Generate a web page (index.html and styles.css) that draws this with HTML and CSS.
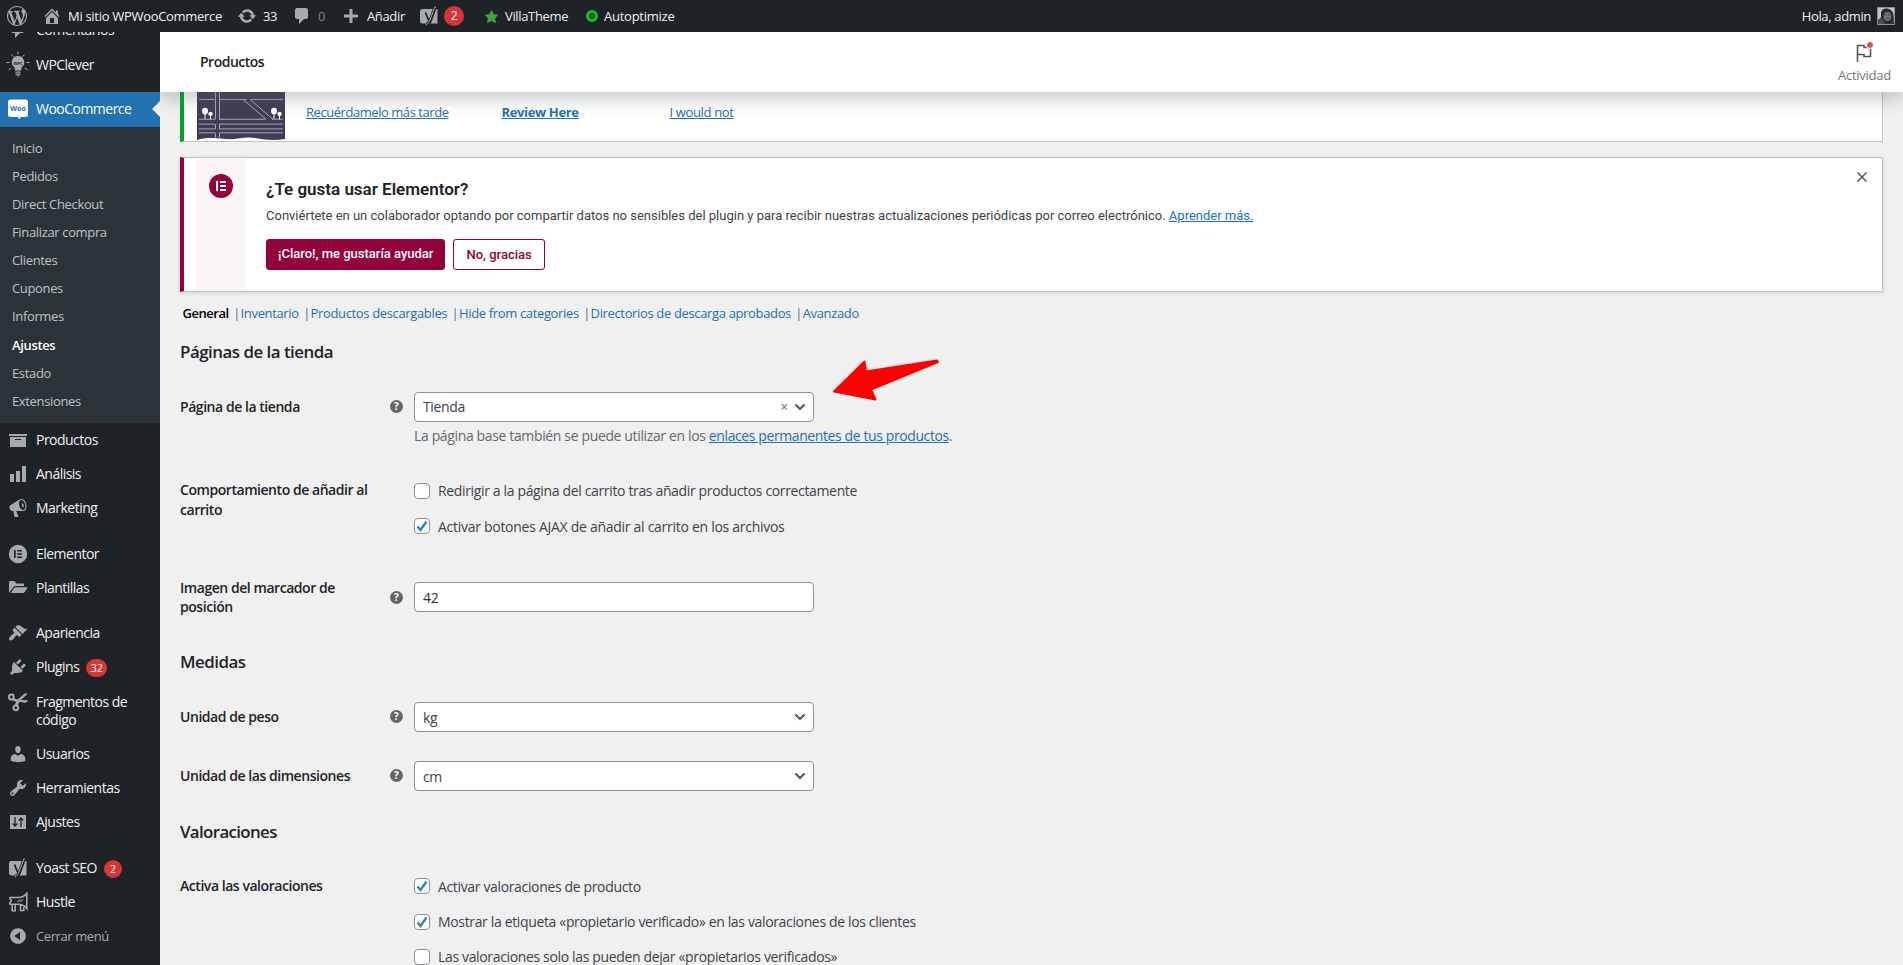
FILE: index.html
```html
<!DOCTYPE html>
<html lang="es">
<head>
  <meta charset="UTF-8" />
  <meta name="viewport" content="width=device-width, initial-scale=1.0" />
  <title>Ajustes de WooCommerce - Productos</title>
  <link rel="stylesheet" href="styles.css">
</head>
<body>
  <!-- Admin bar -->
  <header class="adminbar">
    <a class="ab-item ab-logo"><svg class="icon" viewBox="0 0 20 20"><path d="M20 10c0-5.51-4.49-10-10-10C4.48 0 0 4.49 0 10c0 5.52 4.48 10 10 10 5.51 0 10-4.48 10-10zM7.78 15.37L4.37 6.22c.55-.02 1.17-.08 1.17-.08.5-.06.44-1.13-.06-1.11 0 0-1.45.11-2.37.11-.18 0-.37 0-.58-.01C4.12 2.69 6.87 1.11 10 1.11c2.33 0 4.45.87 6.05 2.34-.68-.11-1.65.39-1.65 1.58 0 .74.45 1.36.9 2.1.35.61.55 1.36.55 2.46 0 1.49-1.4 5-1.4 5l-3.03-8.37c.54-.02.82-.17.82-.17.5-.05.44-1.25-.06-1.22 0 0-1.44.12-2.38.12-.87 0-2.33-.12-2.33-.12-.5-.03-.56 1.2-.06 1.22l.92.08 1.26 3.41zM17.41 10c.24-.64.74-1.87.43-4.25.7 1.29 1.05 2.71 1.05 4.25 0 3.29-1.73 6.24-4.4 7.78.97-2.59 1.94-5.2 2.92-7.78zM6.1 18.09C3.12 16.65 1.11 13.53 1.11 10c0-1.3.23-2.48.72-3.59C3.25 10.3 4.67 14.2 6.1 18.09zm4.03-6.63l2.58 6.98c-.86.29-1.76.45-2.71.45-.79 0-1.57-.11-2.29-.33.81-2.38 1.62-4.74 2.42-7.1z"/></svg></a>
    <a class="ab-item ab-site"><svg class="icon" viewBox="0 0 20 20"><path fill-rule="evenodd" d="M16 8.5l1.53 1.53-1.06 1.06L10 4.6l-6.47 6.49-1.06-1.06L10 2.5l4 4v-2h2v4zm-6-2.46l6 5.99V18H4v-5.97zM12 17v-5H8v5h4z"/></svg><span>Mi sitio WPWooCommerce</span></a>
    <a class="ab-item ab-updates"><svg class="icon" viewBox="0 0 20 20"><path d="M10.2 3.28c3.53 0 6.43 2.61 6.92 6h2.08l-3.5 4-3.5-4h2.32c-.45-1.97-2.21-3.45-4.32-3.45-1.45 0-2.73.71-3.54 1.78L4.95 5.66C6.23 4.2 8.11 3.28 10.2 3.28zm-.4 13.44c-3.52 0-6.43-2.61-6.92-6H.8l3.5-4c1.17 1.33 2.33 2.67 3.5 4H5.48c.45 1.97 2.21 3.45 4.32 3.45 1.45 0 2.73-.71 3.54-1.78l1.71 1.95c-1.28 1.46-3.15 2.38-5.25 2.38z"/></svg><span>33</span></a>
    <a class="ab-item ab-comments"><svg class="icon" viewBox="0 0 20 20"><path d="M5 2h9c1.1 0 2 .9 2 2v7c0 1.1-.9 2-2 2h-2l-5 5v-5H5c-1.1 0-2-.9-2-2V4c0-1.1.9-2 2-2z"/></svg><span class="zero">0</span></a>
    <a class="ab-item ab-new"><svg class="icon" viewBox="0 0 20 20"><path d="M17 8.5v3h-5.5V17h-3v-5.5H3v-3h5.5V3h3v5.5z"/></svg><span>Añadir</span></a>
    <a class="ab-item ab-yoast"><svg class="icon" viewBox="0 0 20 20"><path d="M3.500 3H18.500V17.500H3.500A2.500 2.500 0 0 1 1 15V5.500A2.500 2.500 0 0 1 3.500 3z"/><path class="cut wide" d="M16.500.5L11.300 14.500c-.8 2-1.800 3.700-4.300 4"/><path class="cut" d="M6.500 6.500l3 7.500"/><path class="line thin" d="M17 1h-1.200l-5 13.500c-.7 1.800-1.600 3-3.500 3.600v1.200"/></svg><b class="badge">2</b></a>
    <a class="ab-item ab-villa"><svg class="star" viewBox="0 0 20 20"><path d="M10 1l3 6 6 .75-4.120 4.620L16 19l-6-3-6 3 1.130-6.630L1 7.750 7 7z"/></svg><span>VillaTheme</span></a>
    <a class="ab-item ab-auto"><i class="ring"></i><span>Autoptimize</span></a>
    <a class="ab-item ab-user"><span>Hola, admin</span>
      <svg class="avatar" viewBox="0 0 18 18"><rect width="18" height="18" fill="#8c8f94"/><rect x="1" y="1" width="16" height="16" fill="#c4c6c8"/><path d="M4 15V6.500C4 3.500 6 1.500 9.500 1.500S16 4 16.500 8l.5 9H4z" fill="#2b2c2e"/><ellipse cx="10.500" cy="9.500" rx="3.600" ry="4.400" fill="#77787b"/><path d="M8 8h1.500M11.500 8H13M9.500 11.500h2.500" stroke="#222" stroke-width=".8"/><path d="M1 17v-4l3-3 2 3 2 4z" fill="#4b4d50"/></svg></a>
  </header>

  <div class="layout">
    <!-- Side menu -->
    <nav class="sidebar">
      <ul class="menu">
        <li><a class="menu-top"><svg class="icon" viewBox="0 0 20 20"><path d="M5 2h9c1.100 0 2 .9 2 2v7c0 1.100-.9 2-2 2h-2l-5 5v-5H5c-1.100 0-2-.9-2-2V4c0-1.100.9-2 2-2z"/></svg><span>Comentarios</span></a></li>
        <li><a class="menu-top"><svg class="icon bulb" viewBox="0 0 24 26"><path d="M12 5a6.200 6.200 0 0 1 3.700 11.200l-.7 3.300H9l-.7-3.300A6.200 6.200 0 0 1 12 5zM9.500 20.500h5v1.300h-5zM9.500 22.500h5v1.300h-5zM10.700 24.300h2.600v1h-2.600z"/><path class="line thin" d="M12 .5v3M5.500 3.500l2 2.300M18.500 3.500l-2 2.300M.5 11.500h3M20.500 11.500h3M2.500 19l2.800-2M21.500 19l-2.800-2"/><text x="12" y="13.500">WPC</text></svg><span>WPClever</span></a></li>
        <li class="separator"></li>
        <li><a class="menu-top current"><svg class="icon woo" viewBox="0 0 20 20"><path d="M2.500.500h15A2.500 2.500 0 0 1 20 3v12.500a2.500 2.500 0 0 1-2.500 2.500H13L11.500 20 9.500 18h-7A2.500 2.500 0 0 1 0 15.500V3A2.500 2.500 0 0 1 2.500.5z"/><text x="10" y="11.800">Woo</text></svg><span>WooCommerce</span></a>
          <ul class="submenu">
            <li>Inicio</li>
            <li>Pedidos</li>
            <li>Direct Checkout</li>
            <li>Finalizar compra</li>
            <li>Clientes</li>
            <li>Cupones</li>
            <li>Informes</li>
            <li class="active">Ajustes</li>
            <li>Estado</li>
            <li>Extensiones</li>
          </ul>
        </li>
        <li><a class="menu-top"><svg class="icon" viewBox="0 0 20 20"><path fill-rule="evenodd" d="M19 4v2H1V4h18zM2 7h16v10H2V7zm11 3V9H7v1h6z"/></svg><span>Productos</span></a></li>
        <li><a class="menu-top"><svg class="icon" viewBox="0 0 20 20"><path d="M18 18V2h-4v16h4zm-6 0V7H8v11h4zm-6 0v-8H2v8h4z"/></svg><span>Análisis</span></a></li>
        <li><a class="menu-top"><svg class="icon" viewBox="0 0 20 20"><path d="M18.150 5.940c.46 1.620.38 3.220-.02 4.480-.42 1.280-1.260 2.180-2.300 2.480-.16.060-.26.060-.4.060-.06.020-.12.020-.18.020-.06.020-.14.020-.22.020h-6.800l2.220 5.500c.02.140-.06.260-.14.340-.08.100-.24.160-.34.160H6.950c-.1 0-.26-.06-.34-.16-.08-.08-.16-.2-.14-.34l-1-5.500H4.250l-.02-.02c-.5.060-1.080-.18-1.540-.62s-.88-1.080-1.060-1.880c-.24-.8-.2-1.560-.02-2.200.18-.62.58-1.080 1.060-1.300l.02-.02 9-5.400c.1-.06.18-.1.240-.16.060-.04.140-.08.240-.12.160-.08.280-.12.500-.18 1.040-.3 2.240.1 3.220.98s1.840 2.240 2.260 3.860zm-2.580 5.980h-.02c.4-.1.740-.34 1.040-.7.580-.7.860-1.760.860-3.040 0-.64-.1-1.300-.28-1.980-.34-1.360-1.020-2.500-1.780-3.240s-1.680-1.100-2.460-.88c-.82.220-1.400.96-1.700 2-.32 1.040-.28 2.360.060 3.720.38 1.360 1 2.500 1.800 3.240.78.740 1.620 1.100 2.480.88z"/><path d="M13.500 5.200c1-.3 2 .6 2.200 1.700.3 1.200-.1 2.300-1 2.600"/></svg><span>Marketing</span></a></li>
        <li class="separator"></li>
        <li><a class="menu-top"><svg class="icon" viewBox="0 0 20 20"><path fill-rule="evenodd" d="M10 .8a9.200 9.200 0 1 1 0 18.400A9.200 9.200 0 0 1 10 .8zM6 6v8h1.700V6zM9.200 6v1.500H14V6zM9.200 9.250v1.500H14v-1.500zM9.200 12.500V14H14v-1.500z"/></svg><span>Elementor</span></a></li>
        <li><a class="menu-top"><svg class="icon" viewBox="0 0 20 20"><path d="M1 4.200C1 3.500 1.500 3 2.200 3h3.600c.5 0 .9.300 1.200.7L8.200 5.500h6.600c.7 0 1.200.5 1.200 1.200V8H7.500c-1 0-1.700.4-2.200 1.200L1 15z"/><path d="M7.300 9.200H18.500c.8 0 1.100.6.7 1.200l-2.700 3.800c-.4.500-.9.800-1.500.8H2.800l3.300-5.100c.3-.4.700-.7 1.200-.7z"/></svg><span>Plantillas</span></a></li>
        <li class="separator"></li>
        <li><a class="menu-top"><svg class="icon" viewBox="0 0 20 20"><path d="M14.480 11.060L7.410 3.990l1.500-1.500c.5-.56 2.300-.47 3.510.32 1.210.8 1.430 1.280 2.910 2.100 1.180.64 2.450 1.260 4.450.85zm-.71.710L6.700 4.700 4.930 6.470c-.39.390-.39 1.020 0 1.410l1.060 1.060c.39.390.39 1.030 0 1.420-.6.600-1.430 1.110-2.210 1.690-.35.260-.7.530-1.010.840C1.430 14.230.4 16.080 1.400 17.070c.99 1 2.840-.03 4.180-1.360.31-.31.580-.66.850-1.020.57-.78 1.080-1.610 1.690-2.210.39-.39 1.020-.39 1.410 0l1.060 1.060c.39.390 1.020.390 1.410 0z"/></svg><span>Apariencia</span></a></li>
        <li><a class="menu-top"><svg class="icon" viewBox="0 0 20 20"><path d="M13.110 4.360L9.870 7.600 8 5.730l3.240-3.240c.35-.34 1.050-.2 1.560.32.52.51.66 1.210.310 1.550zm-8 1.770l.91-1.120 9.010 9.010-1.190.84c-.71.710-2.630 1.160-3.820 1.160H6.140L4.900 17.260c-.59.590-1.540.590-2.120 0-.59-.58-.59-1.530 0-2.120l1.240-1.240v-3.880c0-1.130.4-3.190 1.090-3.890zm7.260 3.970l3.240-3.240c.34-.35 1.040-.21 1.550.31.52.51.66 1.210.310 1.550l-3.240 3.250z"/></svg><span>Plugins</span><b class="badge small">32</b></a></li>
        <li><a class="menu-top"><svg class="icon" viewBox="0 0 20 20"><circle class="line ringed" cx="3.400" cy="5" r="2.400"/><circle class="line ringed" cx="7.800" cy="15.800" r="2.400"/><path d="M4.800 6.200l5 1.200 6.500-5.600c1.200-.9 2.600-.6 3.200.3L11.800 8.900l-2.600 5.600-2.400-1 1.200-3.700-4-1.600zM11.300 9.800l1.600-1.700 7.100.2c-.3 1.500-1.600 2.400-3.200 2.400z"/></svg><span>Fragmentos de código</span></a></li>
        <li><a class="menu-top"><svg class="icon" viewBox="0 0 20 20"><path d="M10 9.250c-2.270 0-2.730-3.440-2.730-3.440C7 4.020 7.820 2 9.970 2c2.160 0 2.980 2.020 2.710 3.810 0 0-.41 3.440-2.680 3.440zm0 2.570L12.720 10c2.390 0 4.520 2.330 4.520 4.530v2.490s-3.650 1.130-7.240 1.130c-3.650 0-7.240-1.130-7.240-1.130v-2.490c0-2.250 1.940-4.480 4.470-4.480z"/></svg><span>Usuarios</span></a></li>
        <li><a class="menu-top"><svg class="icon" viewBox="0 0 20 20"><path d="M16.680 9.770c-1.340 1.340-3.300 1.670-4.950.99l-5.410 6.520c-.99.990-2.590.990-3.580 0s-.99-2.590 0-3.570l6.520-5.420c-.68-1.650-.35-3.610.99-4.950 1.280-1.280 3.120-1.620 4.720-1.060l-2.890 2.890 2.820 2.820 2.860-2.870c.53 1.580.18 3.390-1.080 4.650zM3.810 16.210c.4.390 1.040.390 1.430 0 .4-.4.400-1.040 0-1.430-.39-.4-1.030-.4-1.430 0-.39.390-.39 1.030 0 1.430z"/></svg><span>Herramientas</span></a></li>
        <li><a class="menu-top"><svg class="icon" viewBox="0 0 20 20"><path d="M2 3h16v14H2z"/><path class="cut slim" d="M7 5v8.500M13 15V6.500M4.800 11.500L7 14l2.200-2.500M10.800 8.500L13 6l2.200 2.500"/></svg><span>Ajustes</span></a></li>
        <li class="separator"></li>
        <li><a class="menu-top"><svg class="icon" viewBox="0 0 20 20"><path d="M3.500 3H18.500V17.500H3.500A2.500 2.500 0 0 1 1 15V5.500A2.500 2.500 0 0 1 3.500 3z"/><path class="cut wide" d="M16.500.5L11.300 14.500c-.8 2-1.800 3.700-4.300 4"/><path class="cut" d="M6.500 6.500l3 7.500"/><path class="line thin" d="M17 1h-1.200l-5 13.500c-.7 1.800-1.600 3-3.500 3.600v1.200"/></svg><span>Yoast SEO</span><b class="badge small round">2</b></a></li>
        <li><a class="menu-top"><svg class="icon" viewBox="0 0 20 20"><path class="line" d="M18.800 1.200v15.300c-2.500-3.500-5.500-4.200-9-4.200H2.200c-1.500-2 1-2 1-3.800s-2.500-1.800-1-3H9.800c3.500 0 6.500-.8 9-4.300zM4.200 12.500v6.300h3V12.500M12.500 13v5.500h3.300v-3.500"/><path class="line thin" d="M9 9.800l3-2 .3 1.700 3-1.800"/></svg><span>Hustle</span></a></li>
        <li><a class="menu-top collapse"><svg class="icon" viewBox="0 0 20 20"><path fill-rule="evenodd" d="M10 2.160c4.330 0 7.840 3.510 7.840 7.840s-3.510 7.840-7.840 7.840S2.160 14.330 2.160 10 5.710 2.160 10 2.160zm2 11.720V6.120L6.180 9.970z"/></svg><span>Cerrar menú</span></a></li>
      </ul>
    </nav>

    <main class="content">
      <div class="page-header">
        <h1>Productos</h1>
        <div class="activity">
          <svg viewBox="0 0 24 24"><path d="M5.500 21V4.500h6.500v2h6.500v9h-6.500v-2H5.500" /></svg>
          <i class="unread"></i>
          <span>Actividad</span>
        </div>
      </div>

      <div class="wrap">
        <div class="notice review">
          <svg class="map" viewBox="0 0 88 60" preserveAspectRatio="none"><path d="M0 0h88v58c-10 2-20 1-30-1s-18 2-30 1-18-2-28 1z" fill="#3f3d56"/><path d="M2 17h16M22 17h28M54 17h32M2 37.500h16M22 37.500h46M75 37.500h11M2 42.500h16M22 42.500h64M2 47.500h16M22 47.500h64M2 51.500h16M22 51.500h64M18.500 0v17M22.500 0v17M18.500 17v20.500M22.500 17v20.500M18.500 42.500v5M22.500 42.500v5M18.500 51.500v5M22.500 51.500v5M46 17l23 20.500M53 17l23 20.500" stroke="#a9a9b4" fill="none"/><path d="M8 30v7M13.500 33v4.500M77 30v7M82.500 33v4.500" stroke="#fff"/><g fill="#fff"><ellipse cx="8" cy="29" rx="3" ry="3.500"/><circle cx="13.500" cy="32" r="2.200"/><ellipse cx="77" cy="29" rx="3" ry="3.500"/><circle cx="82.500" cy="32" r="2.200"/></g></svg>
          <a class="later">Recuérdamelo más tarde</a>
          <a class="now">Review Here</a>
          <a>I would not</a>
        </div>

        <div class="notice elementor">
          <div class="logo-col">
            <svg class="logo" viewBox="0 0 24 24"><circle cx="12" cy="12" r="12"/><path d="M7 7h2v10H7zM11 7h6v2h-6zM11 11h6v2h-6zM11 15h6v2h-6z" fill="#fff"/></svg>
          </div>
          <div class="notice-body">
            <h3>¿Te gusta usar Elementor?</h3>
            <p>Conviértete en un colaborador optando por compartir datos no sensibles del plugin y para recibir nuestras actualizaciones periódicas por correo electrónico. <a>Aprender más.</a></p>
            <div class="actions">
              <button class="btn primary">¡Claro!, me gustaría ayudar</button>
              <button class="btn">No, gracias</button>
            </div>
          </div>
          <svg class="close" viewBox="0 0 12 12"><path d="M1.500 1.500l9 9M10.500 1.500l-9 9"/></svg>
        </div>

        <ul class="subnav">
          <li class="active">General</li>
          <li>Inventario</li>
          <li>Productos descargables</li>
          <li>Hide from categories</li>
          <li>Directorios de descarga aprobados</li>
          <li>Avanzado</li>
        </ul>

        <h2 class="first">Páginas de la tienda</h2>
        <div class="row shop-page">
          <div class="label"><span>Página de la tienda</span><i class="help">?</i></div>
          <div class="field">
            <div class="select"><span>Tienda</span><em>×</em><svg class="chevron" viewBox="0 0 12 8"><path d="M1.500 1.500L6 6l4.500-4.500"/></svg></div>
            <p class="description">La página base también se puede utilizar en los <a>enlaces permanentes de tus productos</a>.</p>
            <svg class="arrow" viewBox="0 0 106 42"><path d="M1 32.500L31.500 2.500 33 12.500 104 1.500 105 3 38 30.500 42.500 40.500z"/></svg>
          </div>
        </div>
        <div class="row cart">
          <div class="label"><span>Comportamiento de añadir al carrito</span></div>
          <div class="field">
            <label class="check"><i class="box"></i>Redirigir a la página del carrito tras añadir productos correctamente</label>
            <label class="check ajax"><i class="box on"><svg viewBox="0 0 12 12"><path d="M1.500 6.500l3 3.500L10.500 1.500"/></svg></i>Activar botones AJAX de añadir al carrito en los archivos</label>
          </div>
        </div>
        <div class="row placeholder">
          <div class="label"><span>Imagen del marcador de posición</span><i class="help">?</i></div>
          <div class="field"><div class="select text">42</div></div>
        </div>

        <h2 class="measures">Medidas</h2>
        <div class="row weight">
          <div class="label"><span>Unidad de peso</span><i class="help">?</i></div>
          <div class="field"><div class="select"><span>kg</span><svg class="chevron" viewBox="0 0 12 8"><path d="M1.500 1.500L6 6l4.500-4.500"/></svg></div></div>
        </div>
        <div class="row size">
          <div class="label"><span>Unidad de las dimensiones</span><i class="help">?</i></div>
          <div class="field"><div class="select"><span>cm</span><svg class="chevron" viewBox="0 0 12 8"><path d="M1.500 1.500L6 6l4.500-4.500"/></svg></div></div>
        </div>

        <h2 class="reviews">Valoraciones</h2>
        <div class="row ratings">
          <div class="label"><span>Activa las valoraciones</span></div>
          <div class="field">
            <label class="check"><i class="box on"><svg viewBox="0 0 12 12"><path d="M1.500 6.500l3 3.500L10.500 1.500"/></svg></i>Activar valoraciones de producto</label>
            <label class="check"><i class="box on"><svg viewBox="0 0 12 12"><path d="M1.500 6.500l3 3.500L10.500 1.500"/></svg></i>Mostrar la etiqueta «propietario verificado» en las valoraciones de los clientes</label>
            <label class="check"><i class="box"></i>Las valoraciones solo las pueden dejar «propietarios verificados»</label>
          </div>
        </div>
      </div>
    </main>
  </div>
</body>
</html>
```

FILE: styles.css
```css
* {
  box-sizing: border-box;
}
body {
  margin: 0;
  height: 100vh;
  overflow: hidden;
  background: #f0f0f1;
  color: #3c434a;
  font: 13px/1.4 "Open Sans", "Noto Sans", sans-serif;
  letter-spacing: -0.35px;
}
ul, h1, h2, h3, p {
  margin: 0;
  padding: 0;
}
ul {
  list-style: none;
}
i, em {
  font-style: normal;
}
a {
  color: #2271b1;
}
.icon {
  width: 20px;
  height: 20px;
  flex: none;
  fill: #a7aaad;
}
.icon .line {
  fill: none;
  stroke: #a7aaad;
  stroke-width: 1.6;
}
.icon .ringed {
  stroke-width: 2;
}
.icon .thin {
  stroke-width: 1;
}
.icon .cut {
  fill: none;
  stroke: #1d2327;
  stroke-width: 1.8;
}
.icon .slim {
  stroke-width: 1.3;
}
.icon .wide {
  stroke-width: 3.4;
}

/* admin bar */
.adminbar {
  position: relative;
  z-index: 3;
  display: flex;
  height: 32px;
  padding: 0 8px 0 7px;
  background: #1d2327;
}
.ab-item {
  display: flex;
  align-items: center;
  gap: 6px;
  color: #f0f0f1;
  white-space: nowrap;
}
.ab-logo { width: 35px; }
.ab-site {
  width: 195px;
  letter-spacing: -0.3px;
}
.ab-updates { width: 55px; }
.ab-comments { width: 49px; }
.ab-new { width: 78px; }
.ab-yoast { width: 65px; }
.ab-villa { width: 102px; }
.ab-auto { letter-spacing: -0.25px; }
.ab-user { margin-left: auto; }
.ab-comments .zero {
  color: #a7aaad;
  opacity: 0.7;
}
.badge {
  display: inline-flex;
  align-items: center;
  justify-content: center;
  width: 20px;
  height: 20px;
  border-radius: 10px;
  background: #d63638;
  color: #fff;
  font-size: 12px;
  font-weight: 400;
}
.ab-yoast .badge {
  margin-left: -1px;
}
.star {
  width: 15px;
  height: 15px;
  fill: #46a03c;
}
.ring {
  width: 12px;
  height: 12px;
  border: 3px solid #0c0;
  border-radius: 50%;
}
.avatar {
  width: 18px;
  height: 18px;
}

/* side menu */
.layout {
  display: flex;
  height: calc(100vh - 32px);
}
.sidebar {
  flex: 0 0 160px;
  overflow: hidden;
  background: #1d2327;
}
.menu {
  margin-top: -18.6px;
}
.menu-top {
  position: relative;
  display: flex;
  min-height: 34.25px;
  padding: 8px 8px 8px 36px;
  color: #f0f0f1;
  font-size: 14px;
  line-height: 18.2px;
  letter-spacing: -0.52px;
}
.menu-top .icon {
  margin: -1px 8px -1px -28px;
}
.menu-top .bulb {
  width: 24px;
  height: 26px;
  margin: -5px 6px -4px -30px;
}
.icon text {
  font-size: 4px;
  font-weight: 700;
  text-anchor: middle;
  letter-spacing: 0;
  fill: #1d2327;
}
.icon.woo text {
  font-size: 7px;
  fill: #2271b1;
}
.menu-top.current {
  margin-top: -0.6px;
  background: #2271b1;
  color: #fff;
}
.current .icon {
  fill: #fff;
}
.current::after {
  content: "";
  position: absolute;
  right: 0;
  top: 9px;
  border: 8px solid transparent;
  border-left: 0;
  border-right-color: #f0f0f1;
}
.menu-top .small {
  width: 21px;
  height: 18px;
  margin: 1px 0 -1px 7px;
  font-size: 11px;
  letter-spacing: 0;
}
.menu-top .round {
  width: 18px;
}
.separator {
  height: 11px;
}
.submenu {
  padding: 7px 0 7.8px;
  background: #2c3338;
}
.submenu li {
  padding: 5px 12px;
  height: 28.15px;
  color: #bfc2c5;
}
.submenu .active {
  color: #fff;
  font-weight: 600;
}
.menu-top.collapse {
  color: #a7aaad;
  font-size: 13px;
  letter-spacing: -0.4px;
}

/* page header */
.content {
  flex: 1;
  overflow: hidden;
}
.page-header {
  position: relative;
  z-index: 2;
  display: flex;
  align-items: center;
  justify-content: space-between;
  height: 60px;
  padding: 0 12px 0 40px;
  background: #fff;
  box-shadow: 0 8px 16px 0 rgba(85, 93, 102, 0.3);
}
.page-header h1 {
  color: #1e1e1e;
  font-size: 14px;
  font-weight: 600;
  letter-spacing: -0.5px;
}
.activity {
  position: relative;
  display: flex;
  flex-direction: column;
  align-items: center;
  padding-top: 2px;
  color: #757575;
  letter-spacing: -0.25px;
}
.activity svg {
  width: 24px;
  height: 24px;
  margin-bottom: 1px;
  fill: none;
  stroke: #50575e;
  stroke-width: 1.6;
}
.unread {
  position: absolute;
  top: 2px;
  left: 28px;
  width: 8px;
  height: 8px;
  border: 1px solid #fff;
  border-radius: 50%;
  background: #d94f4f;
}

/* notices */
.wrap {
  padding: 0 20px;
}
.notice {
  display: flex;
  border: 1px solid #c3c4c7;
  border-left-width: 4px;
  background: #fff;
}
.review {
  height: 60px;
  margin-top: -10px;
  padding-left: 13px;
  align-items: flex-start;
  border-left-color: #00a32a;
}
.map {
  width: 88px;
  height: 58px;
  margin-right: 21px;
}
.review a {
  margin-top: 20px;
  width: 168px;
  text-decoration: underline;
}
.review .later {
  width: 195.5px;
  letter-spacing: -0.45px;
}
.review .now {
  font-weight: 700;
}
.elementor {
  height: 135px;
  margin-top: 15px;
  padding: 1px 14px 1px 12px;
  border-left-color: #93003c;
  box-shadow: 0 1px 4px rgba(0, 0, 0, 0.15);
  font-family: Roboto, sans-serif;
  letter-spacing: 0;
}
.logo-col {
  width: 50px;
  padding: 15px 13px;
  background: #fcf5f8;
}
.logo {
  width: 24px;
  height: 24px;
  fill: #93003c;
}
.notice-body {
  flex: 1;
  padding: 19px 0 0 20px;
}
.notice-body h3 {
  color: #1d2327;
  font-size: 17px;
  font-weight: 600;
  line-height: 22px;
}
.notice-body p {
  margin-top: 7px;
  line-height: 18px;
}
.notice-body a, .description a {
  text-decoration: underline;
}
.actions {
  display: flex;
  gap: 8px;
  margin-top: 14px;
}
.btn {
  height: 31px;
  padding: 0 12px;
  border: 1px solid #93003c;
  border-radius: 3px;
  background: #fff;
  color: #93003c;
  font: 500 13px Roboto, sans-serif;
}
.btn.primary {
  padding: 0 11px 2px;
  background: #93003c;
  color: #fff;
}
.close {
  width: 12px;
  height: 12px;
  margin-top: 12px;
  stroke: #50575e;
  stroke-width: 1.5;
}

/* section links */
.subnav {
  display: flex;
  height: 20px;
  margin-top: 11px;
  padding-left: 2.5px;
  color: #2271b1;
  line-height: 20px;
  letter-spacing: -0.35px;
}
.subnav li + li::before {
  content: "|";
  margin: 0 0.6px 0 4.4px;
  color: #646970;
}
.subnav .active {
  color: #000;
  font-weight: 600;
  letter-spacing: -0.45px;
}

/* settings form */
h2 {
  color: #1d2327;
  font-size: 16.9px;
  font-weight: 600;
  line-height: 24px;
  letter-spacing: -0.5px;
}
.first { margin-top: 17px; }
.measures { margin-top: 33.5px; }
.reviews {
  margin-top: 29px;
  letter-spacing: -0.65px;
}
.row {
  display: grid;
  grid-template-columns: 234px 1fr;
  font-size: 14px;
}
.shop-page { margin-top: 28px; }
.cart { margin-top: 34px; }
.placeholder {
  align-items: center;
  margin-top: 40.5px;
}
.weight { margin-top: 28px; }
.size { margin-top: 29px; }
.ratings { margin-top: 31px; }
.weight, .size {
  align-items: center;
}
.label {
  display: flex;
  align-items: center;
  justify-content: space-between;
  padding-right: 11px;
  color: #1d2327;
  font-weight: 600;
  line-height: 19.5px;
  letter-spacing: -0.45px;
}
.label span {
  width: 200px;
}
.weight .label, .size .label {
  padding-bottom: 2px;
}
.shop-page .label {
  height: 29px;
}
.cart .label, .ratings .label {
  align-items: flex-start;
}
.ratings .label {
  padding-top: 1px;
}
.help {
  width: 13px;
  height: 13px;
  border-radius: 50%;
  background: #666;
  color: #fff;
  font-size: 10px;
  font-weight: 700;
  line-height: 13px;
  letter-spacing: 0;
  text-align: center;
}
.field {
  position: relative;
}
.select {
  display: flex;
  align-items: center;
  width: 400px;
  height: 30px;
  padding: 0 7px 0 8px;
  border: 1px solid #8c8f94;
  border-radius: 4px;
  background: #fff;
}
.select.text {
  color: #2c3338;
}
.select span {
  flex: 1;
}
.select em {
  margin-right: 6px;
  color: #888;
  font-weight: 600;
}
.chevron {
  width: 12px;
  height: 8px;
  fill: none;
  stroke: #50575e;
  stroke-width: 2;
}
.description {
  margin-top: 4px;
  color: #646970;
  line-height: 20px;
  letter-spacing: -0.36px;
}
.description a {
  letter-spacing: -0.4px;
}
.arrow {
  position: absolute;
  left: 419px;
  top: -33px;
  width: 106px;
  height: 42px;
  fill: #f00;
  stroke: #f00;
  stroke-width: 2;
  stroke-linejoin: round;
}
.check {
  display: flex;
  align-items: center;
  gap: 8px;
  height: 22px;
}
.check + .check {
  margin-top: 13.4px;
}
.ajax {
  letter-spacing: -0.28px;
}
.box {
  width: 16px;
  height: 16px;
  border: 1px solid #8c8f94;
  border-radius: 4px;
  background: #fff;
}
.box svg {
  display: block;
  width: 12px;
  height: 12px;
  margin: 1px;
  fill: none;
  stroke: #3582c4;
  stroke-width: 2.4;
}
```
